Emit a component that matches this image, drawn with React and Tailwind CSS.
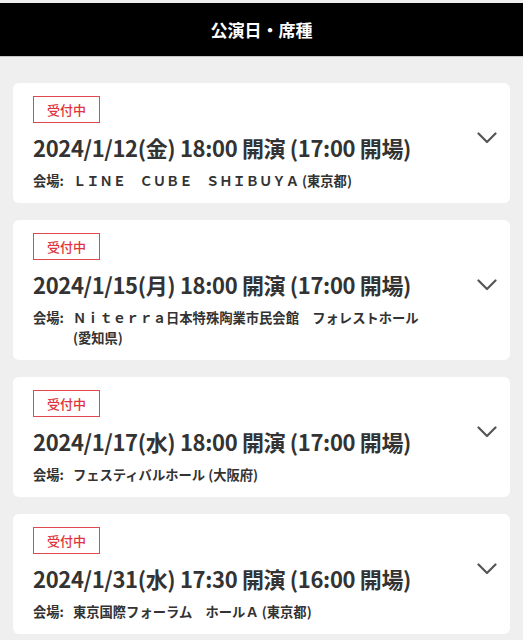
const performances = [
  { date: "2024/1/12(金) 18:00 開演 (17:00 開場)", venue: "ＬＩＮＥ　ＣＵＢＥ　ＳＨＩＢＵＹＡ", pref: "(東京都)" },
  { date: "2024/1/15(月) 18:00 開演 (17:00 開場)", venue: "Ｎｉｔｅｒｒａ日本特殊陶業市民会館　フォレストホール", pref: "(愛知県)" },
  { date: "2024/1/17(水) 18:00 開演 (17:00 開場)", venue: "フェスティバルホール", pref: "(大阪府)" },
  { date: "2024/1/31(水) 17:30 開演 (16:00 開場)", venue: "東京国際フォーラム　ホールＡ", pref: "(東京都)" },
];

function Chevron() {
  return (
    <svg width="20" height="12" viewBox="0 0 20 12" fill="none" className="shrink-0 mb-3">
      <path d="M1.5 1.5 L10 10 L18.5 1.5" stroke="#555" strokeWidth="2.2" strokeLinecap="round" strokeLinejoin="round" />
    </svg>
  );
}

function PerformanceCard({ item }) {
  return (
    <div className="bg-white rounded-md pl-5 pr-[13px] pt-[13px] pb-3 flex items-center">
      <div className="flex-1 min-w-0">
        <span className="inline-block border border-[#e0484f] text-[#e0343c] text-[13px] font-medium leading-[25px] px-[13px]">
          受付中
        </span>
        <div className="mt-2 text-[22px] font-bold leading-8 text-[#333] tracking-[-0.35px]">{item.date}</div>
        <div className="mt-2 flex gap-[9px] text-[13.3px] font-bold leading-5 text-[#333]">
          <span className="shrink-0">会場:</span>
          <span className="pr-2">
            {item.venue}{" "}
            <span className="inline-block">{item.pref}</span>
          </span>
        </div>
      </div>
      <Chevron />
    </div>
  );
}

export default function App() {
  return (
    <div className="min-h-[640px] bg-[#efefef] pt-[3px]" style={{ fontFamily: '"Noto Sans CJK JP", "Noto Sans", sans-serif' }}>
      <header className="h-[54px] bg-black border-b border-[#c6c6c6] flex items-center justify-center">
        <h1 className="text-white text-[17px] font-bold">公演日・席種</h1>
      </header>
      <main className="px-[13px] pt-[26px] pb-4 flex flex-col gap-[17px]">
        {performances.map((p, i) => (
          <PerformanceCard key={i} item={p} />
        ))}
      </main>
    </div>
  );
}
